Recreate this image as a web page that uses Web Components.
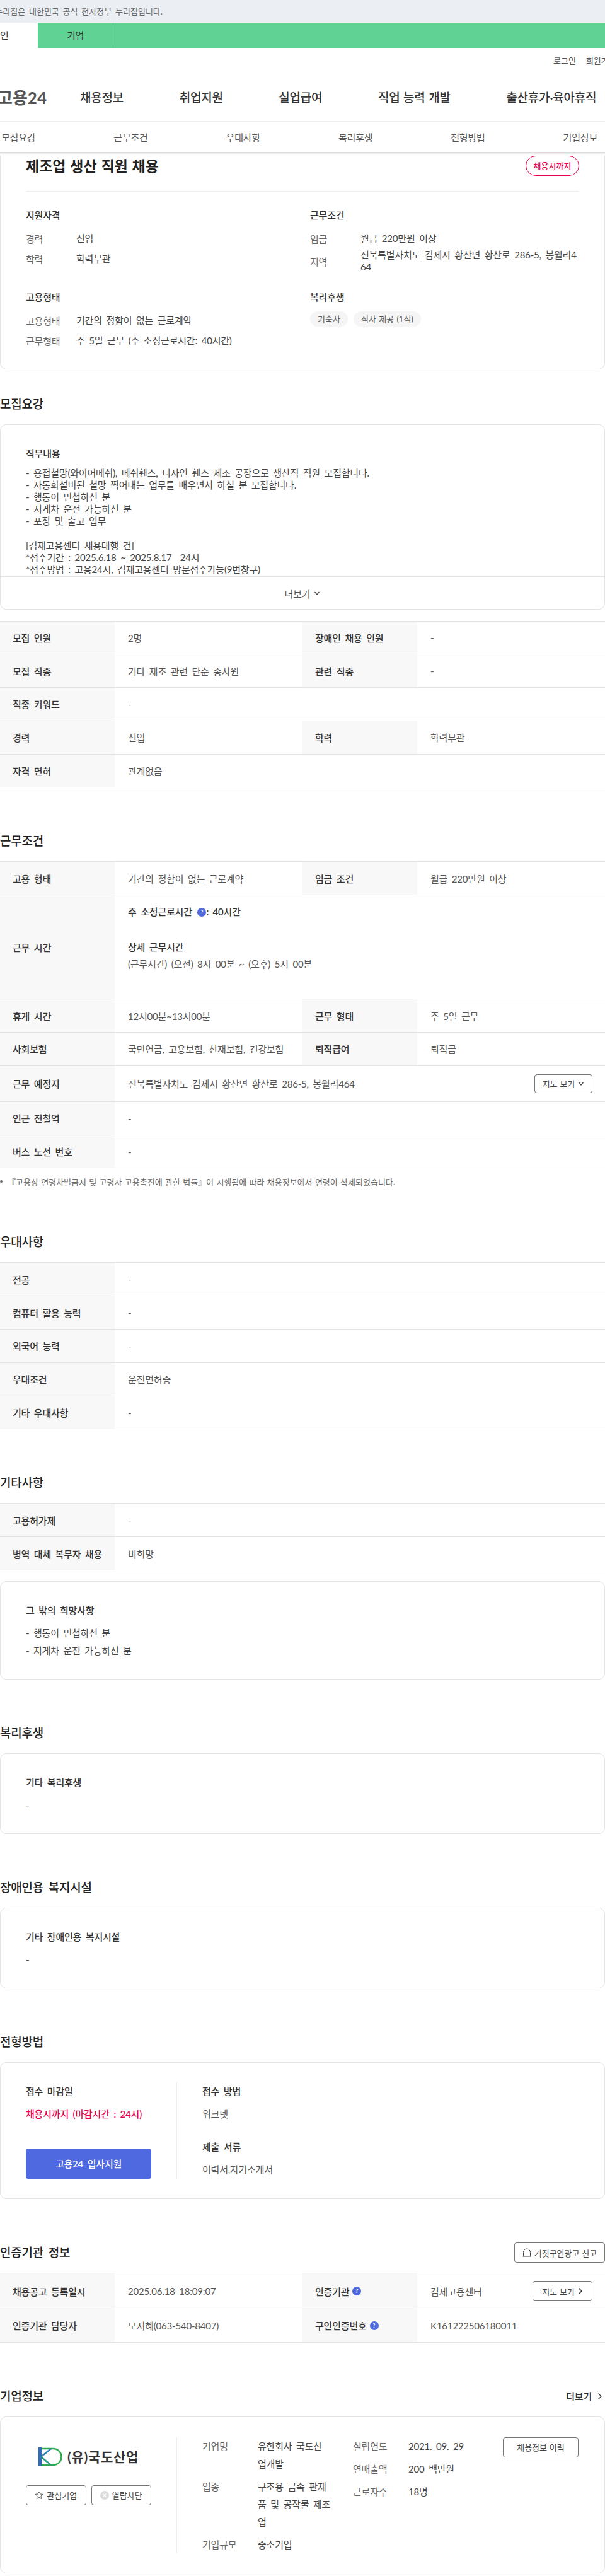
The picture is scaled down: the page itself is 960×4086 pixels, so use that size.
<!DOCTYPE html>
<html lang="ko">
<head>
<meta charset="utf-8">
<title>제조업 생산 직원 채용</title>
<style>
  body { margin: 0; overflow-x: hidden; background: #fff; color: #555; font-family: Lato, "Noto Sans CJK KR", "Noto Sans", sans-serif; font-size: 15px; letter-spacing: -0.2px; word-spacing: 3px; }
</style>
</head>
<body>
<gov-bar></gov-bar>
<site-header></site-header>
<job-summary></job-summary>

<job-section heading="모집요강" style="--top:40px">
  <job-desc></job-desc>
  <info-table style="margin-top:18px">
    <info-row label="모집 인원" value="2명" label2="장애인 채용 인원" value2="-"></info-row>
    <info-row label="모집 직종" value="기타 제조 관련 단순 종사원" label2="관련 직종" value2="-"></info-row>
    <info-row label="직종 키워드" value="-"></info-row>
    <info-row label="경력" value="신입" label2="학력" value2="학력무관"></info-row>
    <info-row label="자격 면허" value="관계없음"></info-row>
  </info-table>
</job-section>

<job-section heading="근무조건">
  <info-table>
    <info-row label="고용 형태" value="기간의 정함이 없는 근로계약" label2="임금 조건" value2="월급 220만원 이상"></info-row>
    <info-row label="근무 시간" h="165"><work-hours></work-hours></info-row>
    <info-row label="휴게 시간" value="12시00분~13시00분" label2="근무 형태" value2="주 5일 근무"></info-row>
    <info-row label="사회보험" value="국민연금, 고용보험, 산재보험, 건강보험" label2="퇴직급여" value2="퇴직금"></info-row>
    <info-row label="근무 예정지" h="57">전북특별자치도 김제시 황산면 황산로 286-5, 봉월리464<line-button slot="action" icon="down" style="width:92px;height:30px">지도 보기</line-button></info-row>
    <info-row label="인근 전철역" value="-"></info-row>
    <info-row label="버스 노선 번호" value="-"></info-row>
  </info-table>
  <foot-note>『고용상 연령차별금지 및 고령자 고용촉진에 관한 법률』이 시행됨에 따라 채용정보에서 연령이 삭제되었습니다.</foot-note>
</job-section>

<job-section heading="우대사항">
  <info-table>
    <info-row label="전공" value="-"></info-row>
    <info-row label="컴퓨터 활용 능력" value="-"></info-row>
    <info-row label="외국어 능력" value="-"></info-row>
    <info-row label="우대조건" value="운전면허증"></info-row>
    <info-row label="기타 우대사항" value="-"></info-row>
  </info-table>
</job-section>

<job-section heading="기타사항">
  <info-table>
    <info-row label="고용허가제" value="-"></info-row>
    <info-row label="병역 대체 복무자 채용" value="비희망"></info-row>
  </info-table>
  <text-card heading="그 밖의 희망사항" style="margin-top:17px">- 행동이 민첩하신 분<br>- 지게차 운전 가능하신 분</text-card>
</job-section>

<job-section heading="복리후생">
  <text-card heading="기타 복리후생">-</text-card>
</job-section>

<job-section heading="장애인용 복지시설">
  <text-card heading="기타 장애인용 복지시설">-</text-card>
</job-section>

<job-section heading="전형방법">
  <apply-card></apply-card>
</job-section>

<job-section heading="인증기관 정보">
  <line-button slot="side" icon="bell" style="width:144px;height:32px">거짓구인광고 신고</line-button>
  <info-table>
    <info-row label="채용공고 등록일시" value="2025.06.18 18:09:07" label2="인증기관" help2 h="57">김제고용센터<line-button slot="action" icon="right" style="width:95px;height:32px">지도 보기</line-button></info-row>
    <info-row label="인증기관 담당자" value="모지혜(063-540-8407)" label2="구인인증번호" help2 value2="K161222506180011"></info-row>
  </info-table>
</job-section>

<job-section heading="기업정보">
  <more-link slot="side">더보기</more-link>
  <company-card></company-card>
</job-section>

<script>
const chevronDown = '<svg width="10" height="10" viewBox="0 0 10 10" fill="none" stroke="#444" stroke-width="1.3"><path d="M1.5 3l3.5 4 3.5-4"/></svg>'
const chevronRight = '<svg width="8" height="12" viewBox="0 0 8 12" fill="none" stroke="#333" stroke-width="1.6"><path d="M1.5 1.5L6 6l-4.500 4.500"/></svg>'

class GovBar extends HTMLElement {
  constructor () {
    super()
    this.attachShadow({ mode: 'open' })
  }

  connectedCallback () {
    this.shadowRoot.innerHTML = /* html */`
      <style>
        :host { display: block; overflow: hidden; }
        .notice { color: #666; font-size: 13px; letter-spacing: 0; word-spacing: 2.5px; height: 36px; line-height: 36px; margin-left: -25.5px; white-space: nowrap; }
        .tabs { background: #60d394; display: flex; height: 40px; font-size: 15px; line-height: 40px; color: #333; text-align: center; }
        .tabs div { width: 120px; flex: none; }
        .tabs .on { background: #fff; margin-left: -60px; }
        .tabs .off { border-right: 1px solid #55c488; box-sizing: border-box; }
        .wrap { background: #ebeef3; }
      </style>
      <div class="wrap"><div class="notice">이 누리집은 대한민국 공식 전자정부 누리집입니다.</div></div>
      <div class="tabs"><div class="on">개인</div><div class="off">기업</div></div>
    `
  }
}

class SiteHeader extends HTMLElement {
  constructor () {
    super()
    this.attachShadow({ mode: 'open' })
  }

  connectedCallback () {
    const subs = ['모집요강', '근무조건', '우대사항', '복리후생', '전형방법', '기업정보']
    this.shadowRoot.innerHTML = /* html */`
      <style>
        :host { display: block; position: relative; z-index: 2; background: #fff; overflow: visible; }
        .util { display: flex; gap: 16px; height: 38px; align-items: center; padding-left: 878px; font-size: 13px; letter-spacing: 0; color: #555; white-space: nowrap; }
        .main { display: flex; align-items: center; height: 78px; white-space: nowrap; }
        .logo { font-size: 26px; font-weight: 700; color: #555; margin-left: -4px; margin-right: 53px; letter-spacing: 0; }
        nav { display: flex; gap: 88.5px; font-size: 19px; font-weight: 500; color: #333; word-spacing: 1px; }
        .subs { display: grid; grid-template-columns: repeat(6, 178.33px); margin-left: -60px; height: 49px; align-items: center; text-align: center; border-top: 1px solid #ececec; box-shadow: 0 2px 4px rgba(0, 0, 0, .18); box-sizing: border-box; color: #555; width: 1070px; background: #fff; }
        .clip { overflow: hidden; padding-bottom: 6px; margin-bottom: -6px; }
      </style>
      <div class="util"><span>로그인</span><span>회원가입</span></div>
      <div class="main">
        <div class="logo">고용24</div>
        <nav><span>채용정보</span><span>취업지원</span><span>실업급여</span><span>직업 능력 개발</span><span>출산휴가·육아휴직</span></nav>
      </div>
      <div class="clip"><div class="subs">${subs.map(s => `<span>${s}</span>`).join('')}</div></div>
    `
  }
}

class JobSummary extends HTMLElement {
  constructor () {
    super()
    this.attachShadow({ mode: 'open' })
  }

  connectedCallback () {
    const row = (k, v, style = '') => `<div class="row" style="${style}"><span class="k">${k}</span><span class="v">${v}</span></div>`
    this.shadowRoot.innerHTML = /* html */`
      <style>
        :host { display: block; }
        .card { border: 1px solid #e4e4e4; border-top: 0; border-radius: 0 0 10px 10px; padding: 6px 40px 34px; height: 345px; box-sizing: border-box; }
        .top { display: flex; justify-content: space-between; align-items: center; height: 32px; padding-bottom: 24px; border-bottom: 1px solid #eee; }
        h1 { margin: 0; font-size: 23px; font-weight: 700; color: #222; line-height: 32px; letter-spacing: 0; word-spacing: 1.2px; }
        .badge { border: 1px solid #e6004c; border-radius: 16px; color: #e6004c; font-size: 13px; letter-spacing: 0; font-weight: 500; width: 83px; height: 30px; line-height: 30px; text-align: center; }
        .grid { display: grid; grid-template-columns: 451px 1fr; row-gap: 27px; margin-top: 23px; }
        h3 { margin: 0 0 11px; font-size: 15px; font-weight: 500; line-height: 28px; color: #333; }
        .row { display: flex; align-items: center; min-height: 24px; margin-bottom: 8px; }
        .k { width: 80px; flex: none; color: #666; }
        .v { color: #444; line-height: 19px; word-break: break-all; }
        .chips { display: flex; gap: 9px; margin-top: -2px; }
        .chip { background: #f5f5f5; border-radius: 12px; height: 24px; line-height: 24px; padding: 0 12px; font-size: 13px; letter-spacing: 0; word-spacing: 1px; color: #555; }
        .b1 { height: 103px; }
      </style>
      <div class="card">
        <div class="top"><h1>제조업 생산 직원 채용</h1><div class="badge">채용시까지</div></div>
        <div class="grid">
          <div class="b1"><h3>지원자격</h3>${row('경력', '신입')}${row('학력', '학력무관')}</div>
          <div class="b1"><h3>근무조건</h3>${row('임금', '월급 220만원 이상')}${row('지역', '전북특별자치도 김제시 황산면 황산로 286-5, 봉월리464', 'height:32px')}</div>
          <div><h3>고용형태</h3>${row('고용형태', '기간의 정함이 없는 근로계약')}${row('근무형태', '주 5일 근무 (주 소정근로시간: 40시간)')}</div>
          <div><h3>복리후생</h3><div class="chips"><span class="chip">기숙사</span><span class="chip">식사 제공 (1식)</span></div></div>
        </div>
      </div>
    `
  }
}

class JobSection extends HTMLElement {
  constructor () {
    super()
    this.attachShadow({ mode: 'open' })
  }

  connectedCallback () {
    this.shadowRoot.innerHTML = /* html */`
      <style>
        :host { display: block; padding-top: var(--top, 70px); }
        header { display: flex; justify-content: space-between; align-items: center; height: 30px; margin-bottom: 17px; }
        h2 { margin: 0; font-size: 19px; font-weight: 500; color: #222; line-height: 30px; }
      </style>
      <header><h2>${this.getAttribute('heading')}</h2><slot name="side"></slot></header>
      <slot></slot>
    `
  }
}

class InfoTable extends HTMLElement {
  constructor () {
    super()
    this.attachShadow({ mode: 'open' })
    this.shadowRoot.innerHTML = /* html */`
      <style>:host { display: block; border-top: 1px solid #e4e4e4; }</style>
      <slot></slot>
    `
  }
}

class InfoRow extends HTMLElement {
  constructor () {
    super()
    this.attachShadow({ mode: 'open' })
  }

  connectedCallback () {
    const label2 = this.getAttribute('label2')
    const help = this.hasAttribute('help2') ? '<help-mark></help-mark>' : ''
    const second = label2 || label2 === ''
    const pair = second ? /* html */`
      <div class="k">${label2}${help}</div>
      <div class="v"><slot>${this.getAttribute('value2') || ''}</slot><slot name="action"></slot></div>
    ` : ''
    const firstValue = second
      ? this.getAttribute('value')
      : `<slot>${this.getAttribute('value') || ''}</slot><slot name="action"></slot>`
    this.shadowRoot.innerHTML = /* html */`
      <style>
        :host { display: block; }
        .row { display: grid; grid-template-columns: ${second ? '182px 298px 182px 298px' : '182px 778px'}; min-height: ${this.getAttribute('h') || 52.8}px; border-bottom: 1px solid #e4e4e4; box-sizing: border-box; }
        .k { background: #f8f8f8; color: #333; font-weight: 500; display: flex; align-items: center; padding-left: 20px; gap: 5px; }
        .v { display: flex; align-items: center; justify-content: space-between; padding: 0 20px 0 21px; color: #555; }
      </style>
      <div class="row">
        <div class="k">${this.getAttribute('label')}</div>
        <div class="v">${firstValue}</div>
        ${pair}
      </div>
    `
  }
}

class HelpMark extends HTMLElement {
  constructor () {
    super()
    this.attachShadow({ mode: 'open' })
    this.shadowRoot.innerHTML = /* html */`
      <style>
        :host { display: inline-block; width: 14px; height: 14px; border-radius: 50%; background: #4f69e0; color: #fff; font-size: 9px; font-weight: 700; line-height: 14px; text-align: center; vertical-align: middle; letter-spacing: 0; }
      </style>?
    `
  }
}

class WorkHours extends HTMLElement {
  constructor () {
    super()
    this.attachShadow({ mode: 'open' })
    this.shadowRoot.innerHTML = /* html */`
      <style>
        :host { display: block; line-height: 28px; padding-bottom: 29px; }
        b { font-weight: 500; color: #333; }
        .detail { margin-top: 28px; font-weight: 500; color: #333; }
        .time { margin-top: -1px; }
        help-mark { margin: -2px 0 0 2px; }
      </style>
      <div><b>주 소정근로시간 <help-mark></help-mark>: 40시간</b></div>
      <div class="detail">상세 근무시간</div>
      <div class="time">(근무시간) (오전) 8시 00분 ~ (오후) 5시 00분</div>
    `
  }
}

class LineButton extends HTMLElement {
  constructor () {
    super()
    this.attachShadow({ mode: 'open' })
  }

  connectedCallback () {
    const icons = {
      down: chevronDown,
      right: chevronRight,
      bell: '<svg width="14" height="14" viewBox="0 0 14 14" fill="none" stroke="#444" stroke-width="1"><path d="M1.500 13V6.500a5.500 5.500 0 0 1 11 0V13M.5 13h13"/></svg>',
      star: '<svg width="14" height="14" viewBox="0 0 14 14" fill="none" stroke="#555" stroke-width="1"><path d="M7 1l1.800 3.900 4.200.5-3.100 2.900.8 4.200L7 10.400 3.300 12.500l.8-4.200L1 5.400l4.200-.5z"/></svg>',
      block: '<svg width="14" height="14" viewBox="0 0 14 14"><circle cx="7" cy="7" r="7" fill="#dcdcdc"/><path d="M4.500 4.500l5 5m0-5l-5 5" stroke="#fff" stroke-width="1.300"/></svg>'
    }
    const icon = this.getAttribute('icon')
    const svg = icons[icon] || ''
    const before = icon === 'bell' || icon === 'star' || icon === 'block'
    this.shadowRoot.innerHTML = /* html */`
      <style>
        :host { display: inline-flex; align-items: center; justify-content: center; gap: 5px; border: 1px solid #777; border-radius: 4px; box-sizing: border-box; font-size: 13px; letter-spacing: 0; word-spacing: 0.5px; color: #444; background: #fff; flex: none; white-space: nowrap; }
        svg { display: block; flex: none; }
      </style>
      ${before ? svg : ''}<slot></slot>${before ? '' : svg}
    `
  }
}

class FootNote extends HTMLElement {
  constructor () {
    super()
    this.attachShadow({ mode: 'open' })
    this.shadowRoot.innerHTML = /* html */`
      <style>
        :host { display: flex; align-items: center; height: 22px; margin-top: 10px; font-size: 13px; letter-spacing: 0; word-spacing: 1px; color: #666; white-space: nowrap; }
        i { width: 4px; height: 4px; border-radius: 50%; background: #666; margin: 0 8px 0 0; flex: none; }
      </style>
      <i></i><slot></slot>
    `
  }
}

class JobDesc extends HTMLElement {
  constructor () {
    super()
    this.attachShadow({ mode: 'open' })
    this.shadowRoot.innerHTML = /* html */`
      <style>
        :host { display: block; border: 1px solid #e4e4e4; border-radius: 10px; height: 293.5px; box-sizing: border-box; overflow: hidden; }
        .body { height: 240px; overflow: hidden; padding: 31px 40px 0; box-sizing: border-box; }
        h3 { margin: 0 0 8px; font-size: 15px; font-weight: 500; line-height: 28px; color: #333; }
        .text { line-height: 19.1px; color: #444; white-space: pre-wrap; }
        .more { border-top: 1px solid #e4e4e4; height: 52px; display: flex; align-items: center; justify-content: center; gap: 6px; color: #555; }
      </style>
      <div class="body">
        <h3>직무내용</h3>
        <div class="text">- 용접철망(와이어메쉬), 메쉬휀스, 디자인 휀스 제조 공장으로 생산직 직원 모집합니다.
- 자동화설비된 철망 찍어내는 업무를 배우면서 하실 분 모집합니다.
- 행동이 민첩하신 분
- 지게차 운전 가능하신 분
- 포장 및 출고 업무

[김제고용센터 채용대행 건]
*접수기간 : 2025.6.18 ~ 2025.8.17  24시
*접수방법 : 고용24시, 김제고용센터 방문접수가능(9번창구)</div>
      </div>
      <div class="more"><span>더보기</span>${chevronDown}</div>
    `
  }
}

class TextCard extends HTMLElement {
  constructor () {
    super()
    this.attachShadow({ mode: 'open' })
  }

  connectedCallback () {
    this.shadowRoot.innerHTML = /* html */`
      <style>
        :host { display: block; border: 1px solid #e4e4e4; border-radius: 10px; padding: 31px 40px; }
        h3 { margin: 0 0 8px; font-size: 15px; font-weight: 500; line-height: 28px; color: #333; }
        .text { line-height: 28px; color: #444; }
      </style>
      <h3>${this.getAttribute('heading')}</h3>
      <div class="text"><slot></slot></div>
    `
  }
}

class ApplyCard extends HTMLElement {
  constructor () {
    super()
    this.attachShadow({ mode: 'open' })
    this.shadowRoot.innerHTML = /* html */`
      <style>
        :host { display: flex; border: 1px solid #e4e4e4; border-radius: 10px; padding: 31px 40px; line-height: 28px; }
        .left { width: 199px; padding-right: 40px; border-right: 1px solid #eee; flex: none; }
        .right { padding-left: 40px; }
        h4 { margin: 0 0 8px; font-size: 15px; font-weight: 500; color: #333; }
        .red { color: #e6004c; font-weight: 500; white-space: nowrap; }
        .apply { display: block; margin-top: 41px; height: 48px; line-height: 48px; border-radius: 4px; background: #4f69e0; color: #fff; text-align: center; font-weight: 500; }
        .docs { margin-top: 24px; }
      </style>
      <div class="left">
        <h4>접수 마감일</h4>
        <div class="red">채용시까지 (마감시간 : 24시)</div>
        <div class="apply">고용24 입사지원</div>
      </div>
      <div class="right">
        <h4>접수 방법</h4>
        <div>워크넷</div>
        <h4 class="docs">제출 서류</h4>
        <div>이력서,자기소개서</div>
      </div>
    `
  }
}

class MoreLink extends HTMLElement {
  constructor () {
    super()
    this.attachShadow({ mode: 'open' })
    this.shadowRoot.innerHTML = /* html */`
      <style>
        :host { display: flex; align-items: center; gap: 9px; padding-right: 4px; font-weight: 500; color: #333; }
        svg { display: block; }
      </style>
      <slot></slot>${chevronRight.replace('stroke-width="1.6"', 'stroke-width="1.200"')}
    `
  }
}

class CompanyCard extends HTMLElement {
  constructor () {
    super()
    this.attachShadow({ mode: 'open' })
  }

  connectedCallback () {
    const row = (k, v) => `<div class="row"><span class="k">${k}</span><span class="v">${v}</span></div>`
    this.shadowRoot.innerHTML = /* html */`
      <style>
        :host { display: flex; border: 1px solid #e4e4e4; border-radius: 10px; padding: 32px 40px 31px; height: 249px; box-sizing: border-box; line-height: 28px; }
        .left { width: 199px; padding-right: 40px; border-right: 1px solid #eee; flex: none; }
        .logo { display: flex; align-items: center; gap: 8px; margin: 16px 0 30px 20px; height: 30px; white-space: nowrap; }
        .logo span { font-size: 21px; font-weight: 700; color: #333; letter-spacing: .7px; line-height: 30px; }
        .logo svg { display: block; flex: none; }
        .btns { display: flex; gap: 8px; }
        .btns line-button { height: 32px; flex: 1; }
        .info { display: flex; padding-left: 40px; flex: 1; }
        .col { display: flex; flex-direction: column; gap: 8px; }
        .col.a { width: 239px; flex: none; }
        .col.b { width: 238px; flex: none; }
        .row { display: flex; }
        .k { width: 88px; flex: none; color: #666; }
        .v { color: #444; white-space: nowrap; }
        .hist { width: 120px; height: 32px; flex: none; }
      </style>
      <div class="left">
        <div class="logo">
          <svg width="38" height="30" viewBox="0 0 38 30" fill="none">
            <path d="M5 2h18c8 0 13.500 6 13.500 13S31 28 23 28H5" stroke="#2fa84f" stroke-width="2.600"/>
            <path d="M2.500 0v30" stroke="#2d6db5" stroke-width="5"/>
            <path d="M4 15L20 2" stroke="#2d82b5" stroke-width="2.600"/>
            <path d="M4 15l16 13" stroke="#2b9a88" stroke-width="2.600"/>
          </svg>
          <span>(유)국도산업</span>
        </div>
        <div class="btns">
          <line-button icon="star">관심기업</line-button>
          <line-button icon="block">열람차단</line-button>
        </div>
      </div>
      <div class="info">
        <div class="col a">
          ${row('기업명', '유한회사 국도산<br>업개발')}
          ${row('업종', '구조용 금속 판제<br>품 및 공작물 제조<br>업')}
          ${row('기업규모', '중소기업')}
        </div>
        <div class="col b">
          ${row('설립연도', '2021. 09. 29')}
          ${row('연매출액', '200 백만원')}
          ${row('근로자수', '18명')}
        </div>
        <line-button class="hist">채용정보 이력</line-button>
      </div>
    `
  }
}

customElements.define('help-mark', HelpMark)
customElements.define('gov-bar', GovBar)
customElements.define('site-header', SiteHeader)
customElements.define('job-summary', JobSummary)
customElements.define('job-section', JobSection)
customElements.define('info-table', InfoTable)
customElements.define('info-row', InfoRow)
customElements.define('work-hours', WorkHours)
customElements.define('line-button', LineButton)
customElements.define('foot-note', FootNote)
customElements.define('job-desc', JobDesc)
customElements.define('text-card', TextCard)
customElements.define('apply-card', ApplyCard)
customElements.define('more-link', MoreLink)
customElements.define('company-card', CompanyCard)
</script>
</body>
</html>
